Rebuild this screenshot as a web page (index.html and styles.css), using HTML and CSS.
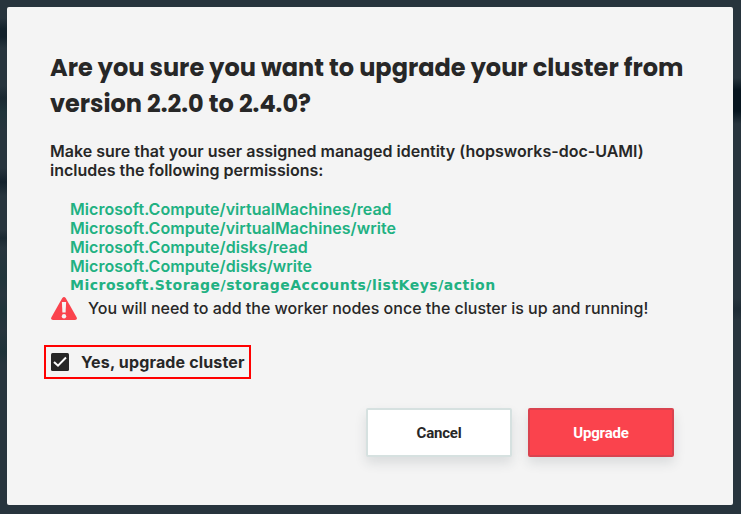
FILE: index.html
```html
<!DOCTYPE html>
<html lang="en">
<head>
<meta charset="utf-8">
<title>Upgrade cluster</title>
<link rel="stylesheet" href="styles.css">
</head>
<body>
<main class="dialog">
  <h1 class="title">Are you sure you want to upgrade your cluster from<br>version 2.2.0 to 2.4.0?</h1>
  <p class="intro">Make sure that your user assigned managed identity (hopsworks-doc-UAMI)<br>includes the following permissions:</p>
  <ul class="permissions">
    <li>Microsoft.Compute/virtualMachines/read</li>
    <li>Microsoft.Compute/virtualMachines/write</li>
    <li>Microsoft.Compute/disks/read</li>
    <li>Microsoft.Compute/disks/write</li>
    <li class="storage">Microsoft.Storage/storageAccounts/listKeys/action</li>
  </ul>
  <div class="warning">
    <svg class="warning-icon" viewBox="0 0 26 23" aria-hidden="true">
      <path d="M11.3 1Q13-1 14.7 1L25.6 20.2Q26.6 23 24 23H2Q-.6 23 .4 20.2Z" fill="#fa434d"/>
      <path d="M10.9 5H15.1L14.6 15.5H11.4Z" fill="#f4f4f4"/>
      <circle cx="13" cy="19.2" r="2.2" fill="#f4f4f4"/>
    </svg>
    <span>You will need to add the worker nodes once the cluster is up and running!</span>
  </div>
  <label class="confirm">
    <svg class="checkbox" viewBox="0 0 18 18" aria-hidden="true">
      <rect width="18" height="18" rx="1.5" fill="#272727"/>
      <path d="M3 8.9L7 12.7L15 4.5" fill="none" stroke="#fff" stroke-width="2"/>
    </svg>
    <span>Yes, upgrade cluster</span>
  </label>
  <div class="actions">
    <button class="button cancel">Cancel</button>
    <button class="button upgrade">Upgrade</button>
  </div>
</main>
</body>
</html>
```
FILE: styles.css
```css
* { box-sizing: border-box; }

body {
  margin: 0;
  height: 514px;
  padding: 7px 8px 9px 7px;
  overflow: hidden;
  background:
    linear-gradient(#27343d 78px, #07151f 90px, #07151f 111px, #27343d 124px, #27343d 298px, #1e2b35 309px, #27343d 320px) right / 8px 514px no-repeat,
    linear-gradient(#27343d 18px, #14222c 29px, #14222c 37px, #27343d 48px, #27343d 86px, #1a2831 98px, #20343a 112px, #27343d 130px, #27343d 168px, #14222c 182px, #27343d 196px, #27343d 230px, #1b2932 238px, #27343d 248px, #20343a 278px, #27343d 295px, #20343a 310px, #27343d 330px, #1e3238 352px, #27343d 365px) left / 7px 514px no-repeat,
    #27343d;
  color: #272727;
  font: 500 16px/19px Inter, sans-serif;
}

.dialog {
  height: 498px;
  padding: 43px 44px 0 43px;
  border-radius: 2px;
  background: #f4f4f4;
}

.title {
  margin: 0;
  font: 700 24px/36px Poppins, Inter, sans-serif;
  white-space: nowrap;
}

.intro {
  margin: 20px 0 0;
  font-weight: 600;
  letter-spacing: 0.005px;
  white-space: nowrap;
}

.permissions {
  margin: 20px 0 0;
  padding: 0 0 0 20px;
  list-style: none;
  color: #21b182;
  font-weight: 600;
  letter-spacing: 0.04px;
}

.permissions li { height: 19px; }

.permissions .storage {
  height: 17px;
  font: 700 14px/19px "DejaVu Sans", sans-serif;
  letter-spacing: 0.51px;
}

.warning {
  display: flex;
  align-items: center;
  gap: 11px;
  height: 25px;
  margin-top: 3px;
  white-space: nowrap;
}

.warning-icon { width: 26px; height: 23px; margin-left: 1px; }

.confirm {
  display: flex;
  align-items: center;
  width: 207px;
  height: 34px;
  margin: 24px 0 0 -6px;
  padding: 0 0 0 5px;
  border: 2px solid #f00;
  gap: 12px;
  font-weight: 700;
  letter-spacing: 0.15px;
  white-space: nowrap;
}

.checkbox { width: 18px; height: 18px; }

.actions {
  display: flex;
  gap: 16px;
  margin: 29px 0 0 316px;
}

.button {
  width: 146px;
  height: 49px;
  padding: 0;
  border: 2px solid #d6e1e0;
  border-radius: 2px;
  box-shadow: 0 6px 12px #27343d20;
  font: 700 15px/20px Roboto, sans-serif;
  letter-spacing: -0.2px;
}

.cancel { background: #fff; color: #272727; }
.upgrade { background: #fa434d; border-color: #d9434f; color: #fff; }
```
